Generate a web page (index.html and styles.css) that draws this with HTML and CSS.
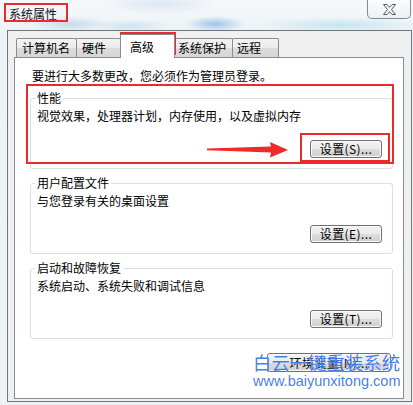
FILE: index.html
```html
<!DOCTYPE html>
<html lang="zh-CN">
<head>
<meta charset="utf-8">
<title>系统属性</title>
<link rel="stylesheet" href="styles.css">
</head>
<body>
<div class="screen">
  <div class="titlebar">
    <span class="title">系统属性</span>
    <div class="close">
      <svg width="13" height="11" viewBox="0 0 13 11"><path d="M0.5,0.5 H4 L6.5,3.3 L9,0.5 H12.5 L8.5,5.5 L12.5,10.5 H9 L6.5,7.7 L4,10.5 H0.5 L4.5,5.5 Z" fill="#f4f6f8" stroke="#505a62" stroke-width="1"/></svg>
    </div>
  </div>
  <div class="window">
    <div class="tabs">
      <div class="tab t1">计算机名</div>
      <div class="tab t2">硬件</div>
      <div class="tab active">高级</div>
      <div class="tab t4">系统保护</div>
      <div class="tab t5">远程</div>
    </div>
    <div class="panel">
      <p class="intro">要进行大多数更改，您必须作为管理员登录。</p>
      <fieldset class="group first">
        <legend>性能</legend>
        <div class="desc">视觉效果，处理器计划，内存使用，以及虚拟内存</div>
        <div class="btnrow"><button class="btn">设置(S)...</button></div>
      </fieldset>
      <fieldset class="group">
        <legend>用户配置文件</legend>
        <div class="desc">与您登录有关的桌面设置</div>
        <div class="btnrow"><button class="btn">设置(E)...</button></div>
      </fieldset>
      <fieldset class="group">
        <legend>启动和故障恢复</legend>
        <div class="desc">系统启动、系统失败和调试信息</div>
        <div class="btnrow"><button class="btn">设置(T)...</button></div>
      </fieldset>
      <div class="envrow"><button class="btn env">环境变量(N)...</button></div>
    </div>
  </div>

  <div class="mark mark-title"></div>
  <div class="mark mark-tab"></div>
  <div class="mark mark-perf"></div>
  <div class="mark mark-btn"></div>
  <svg class="arrow" width="90" height="22" viewBox="0 0 90 22"><path d="M2,8.6 L66,6.5 L65,2 L83,10 L65,17.5 L66,12.5 L2,10.2 Z" fill="#ee2a2a"/></svg>

  <div class="watermark">
    <div class="wm-cn">白云一键重装系统</div>
    <div class="wm-url">www.baiyunxitong.com</div>
  </div>
</div>
</body>
</html>
```
FILE: styles.css
```css
html, body {
  margin: 0;
  padding: 0;
}
body {
  width: 413px;
  height: 405px;
  overflow: hidden;
  font-family: "Noto Sans CJK SC", "Liberation Sans", sans-serif;
  font-size: 12px;
  line-height: 14px;
  color: #000;
}
.screen {
  position: relative;
  width: 413px;
  height: 405px;
  background:
    radial-gradient(ellipse 40px 8px at 70px 24px, rgba(120,170,210,0.35), rgba(120,170,210,0)),
    radial-gradient(ellipse 30px 8px at 215px 24px, rgba(60,140,220,0.45), rgba(60,140,220,0)),
    radial-gradient(ellipse 40px 7px at 130px 26px, rgba(140,190,220,0.3), rgba(140,190,220,0)),
    radial-gradient(ellipse 80px 8px at 340px 25px, rgba(120,200,225,0.35), rgba(120,200,225,0)),
    radial-gradient(ellipse 60px 10px at 160px 4px, rgba(170,200,225,0.35), rgba(170,200,225,0)),
    linear-gradient(#f6f9fb, #edf3f6 30px, #eef2f4);
}
.titlebar {
  height: 30px;
  display: flex;
  justify-content: space-between;
  align-items: flex-start;
}
.title {
  padding: 7px 0 0 9px;
  color: #111;
}
.close {
  width: 44px;
  height: 19px;
  margin-right: 2px;
  box-sizing: border-box;
  border: 1px solid #7e8a94;
  border-top: none;
  border-radius: 0 0 5px 5px;
  background: linear-gradient(rgba(255,255,255,0.55), rgba(230,238,243,0.6));
  display: flex;
  align-items: center;
  justify-content: center;
}
.window {
  margin-left: 7px;
  width: 405px;
  height: 372px;
  box-sizing: border-box;
  border: 1px solid #6e757c;
  background: #f0f0f0;
  padding: 0 7px 2px 6px;
}
.tabs {
  display: flex;
  align-items: flex-end;
  padding: 3px 0 0 2px;
  height: 23px;
}
.tab {
  box-sizing: border-box;
  height: 19px;
  padding: 2px 0 0 5px;
  border: 1px solid #898c95;
  border-bottom: none;
  border-radius: 2px 2px 0 0;
  background: linear-gradient(#f3f3f3, #ebebeb 50%, #dcdcdc 51%, #d6d6d6);
  white-space: nowrap;
}
.t1 { width: 61px; }
.t2 { width: 45px; margin-left: -1px; }
.t4 { width: 59px; margin-left: -1px; padding-left: 3px; }
.t5 { width: 47px; margin-left: -1px; padding-left: 4px; }
.tab.active {
  position: relative;
  z-index: 2;
  width: 55px;
  height: 24px;
  margin-left: -1px;
  margin-bottom: -1px;
  padding: 5px 0 0 9px;
  background: #fff;
}
.panel {
  box-sizing: border-box;
  height: 342px;
  border: 1px solid #898c95;
  background: #fff;
  padding-top: 11px;
}
.intro {
  margin: 0 0 0 17px;
}
.group {
  margin: 7px 10px 0 15px;
  padding: 0 10px 10px 6px;
  min-width: 0;
  border: 1px solid #d5dfe5;
  border-radius: 3px;
}
.group.first {
  margin-top: 8px;
}
.group legend {
  padding: 0 2px;
  margin-left: -2px;
  line-height: 14px;
}
.desc {
  margin-top: 4px;
}
.btnrow {
  margin-top: 17px;
  display: flex;
  justify-content: flex-end;
}
.btn {
  box-sizing: border-box;
  width: 72px;
  height: 18px;
  padding: 0;
  margin: 0;
  font-family: "Noto Sans CJK SC", "Liberation Sans", sans-serif;
  font-size: 12px;
  line-height: 16px;
  color: #000;
  border: 1px solid #707070;
  border-radius: 3px;
  background: linear-gradient(#f2f2f2, #ebebeb 50%, #dddddd 51%, #cfcfcf);
  box-shadow: inset 0 0 0 1px #fbfbfb;
  letter-spacing: 0.4px;
}
.envrow {
  margin: 14px 12px 0 0;
  display: flex;
  justify-content: flex-end;
}
.btn.env {
  width: 124px;
  height: 19px;
}
.mark {
  position: absolute;
  box-sizing: border-box;
  border: 2px solid #ea2b2b;
}
.mark-title { left: 4px; top: 3px; width: 64px; height: 19px; }
.mark-tab { left: 120px; top: 32px; width: 56px; height: 23px; }
.mark-perf { left: 26px; top: 84px; width: 368px; height: 80px; }
.mark-btn { left: 300px; top: 133px; width: 90px; height: 29px; }
.arrow {
  position: absolute;
  left: 205px;
  top: 140px;
}
.watermark {
  position: absolute;
  left: 253px;
  top: 351px;
  color: rgba(40, 108, 226, 0.88);
  text-shadow: 0 0 1px rgba(255,255,255,0.9);
}
.wm-cn {
  font-size: 18.4px;
  line-height: 22px;
  white-space: nowrap;
}
.wm-url {
  font-family: "Liberation Sans", sans-serif;
  font-size: 14.5px;
  line-height: 17px;
  white-space: nowrap;
}
```
